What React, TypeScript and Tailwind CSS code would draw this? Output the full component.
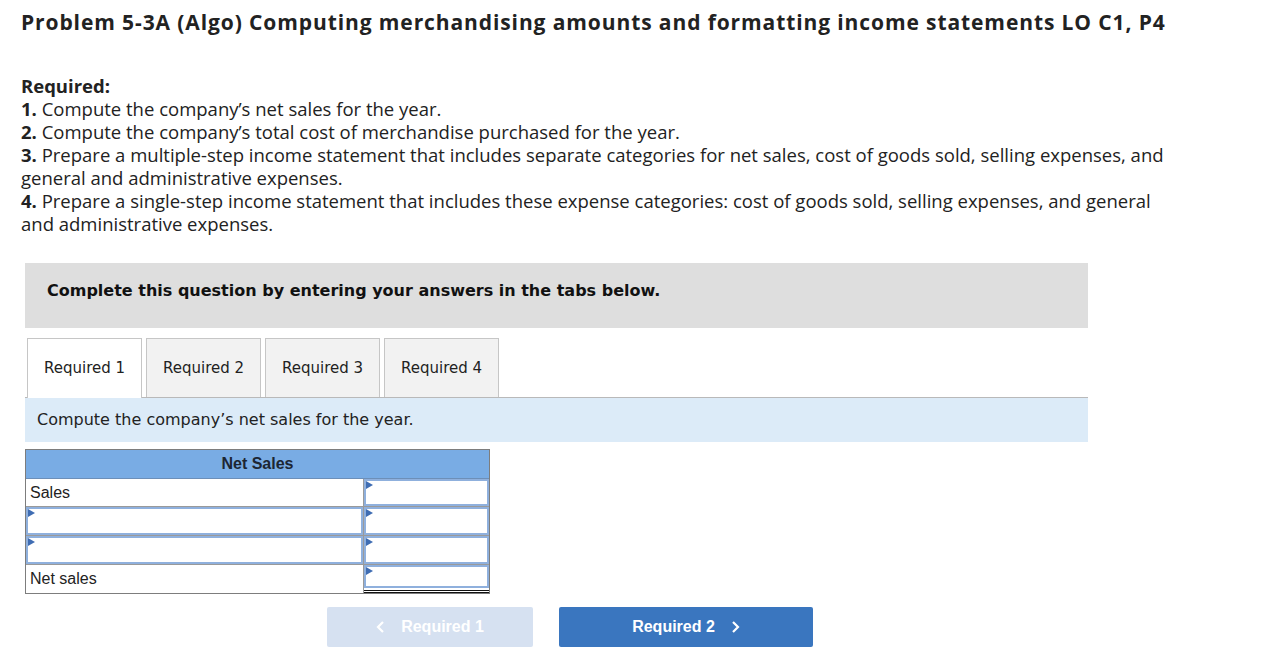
import React from 'react';

const tabs = ['Required 1', 'Required 2', 'Required 3', 'Required 4'];

const Marker = () => (
  <span className="absolute left-0 top-0 w-0 h-0 border-t-[4px] border-b-[4px] border-l-[7px] border-t-transparent border-b-transparent border-l-[#3f6db3]" />
);

const InputCell = ({ className = '' }: { className?: string }) => (
  <div className={`relative h-full border-2 border-[#8fb0dd] bg-white ${className}`}>
    <Marker />
  </div>
);

const Chevron = ({ dir }: { dir: 'left' | 'right' }) => (
  <svg width="9" height="14" viewBox="0 0 9 14">
    <path d={dir === 'right' ? 'M2 2l5 5-5 5' : 'M7 2L2 7l5 5'} stroke="white" strokeWidth="2.2" fill="none" />
  </svg>
);

export default function App() {
  return (
    <div className="w-[1282px] h-[665px] bg-white text-[#222] overflow-hidden">
      <div className="pl-[21px] pt-[8px]" style={{ fontFamily: '"Open Sans", Lato, sans-serif' }}>
        <h1 className="text-[21px] leading-[28px] font-bold tracking-[0.9px] text-[#222]">
          Problem 5-3A (Algo) Computing merchandising amounts and formatting income statements LO C1, P4
        </h1>

        <div className="mt-[38px] text-[18.5px] leading-[23px] w-[1155px] text-[#222]">
          <p className="font-bold">Required:</p>
          <p><b>1.</b> Compute the company’s net sales for the year.</p>
          <p><b>2.</b> Compute the company’s total cost of merchandise purchased for the year.</p>
          <p><b>3.</b> Prepare a multiple-step income statement that includes separate categories for net sales, cost of goods sold, selling expenses, and general and administrative expenses.</p>
          <p><b>4.</b> Prepare a single-step income statement that includes these expense categories: cost of goods sold, selling expenses, and general and administrative expenses.</p>
        </div>
      </div>

      <div className="ml-[25px] mt-[28px] w-[1063px]" style={{ fontFamily: '"DejaVu Sans", Verdana, sans-serif' }}>
        <div className="h-[65px] bg-[#dedede] flex items-center pl-[22px] pb-[10px]">
          <span className="text-[16px] font-bold text-[#111]">Complete this question by entering your answers in the tabs below.</span>
        </div>

        <div className="mt-[10px] flex items-end h-[60px] border-b border-[#b9b9b9]">
          {tabs.map((t, i) => (
            <div
              key={t}
              className={`w-[115px] h-[59px] mx-[2px] flex items-center justify-center text-[15px] border border-[#c6c6c6] border-b-0 ${
                i === 0 ? 'bg-white h-[60px] -mb-px' : 'bg-[#f2f2f2]'
              }`}
            >
              {t}
            </div>
          ))}
        </div>

        <div className="h-[44px] bg-[#dcebf8] flex items-center pl-[12px] text-[16px] text-[#222]">
          Compute the company’s net sales for the year.
        </div>

        <div className="mt-[7px] w-[465px] border border-[#7d7d7d]" style={{ fontFamily: '"Liberation Sans", Arial, sans-serif' }}>
          <div className="h-[29px] bg-[#79ace4] flex items-center justify-center text-[16px] font-bold text-[#1c2633] border-b border-[#6d8fb8]">
            Net Sales
          </div>
          <div className="grid grid-cols-[338px_1fr]">
            <div className="h-[28px] flex items-center pl-[4px] text-[16px] border-b border-r border-[#9a9a9a]">Sales</div>
            <div className="h-[28px] border-b border-[#9a9a9a]">
              <InputCell />
            </div>
            <div className="h-[29px] border-b border-r border-[#9a9a9a]">
              <InputCell />
            </div>
            <div className="h-[29px] border-b border-[#9a9a9a]">
              <InputCell />
            </div>
            <div className="h-[29px] border-b border-r border-[#9a9a9a]">
              <InputCell />
            </div>
            <div className="h-[29px] border-b border-[#9a9a9a]">
              <InputCell />
            </div>
            <div className="h-[28px] flex items-center pl-[4px] text-[16px] border-r border-[#9a9a9a]">Net sales</div>
            <div className="h-[28px] pb-[2px] border-b-[3px] border-double border-[#111]">
              <InputCell />
            </div>
          </div>
        </div>

        <div className="mt-[13px] flex gap-[26px] pl-[302px]" style={{ fontFamily: '"Liberation Sans", Arial, sans-serif' }}>
          <div className="w-[206px] h-[40px] rounded-[2px] bg-[#d6e1f1] flex items-center justify-center gap-[16px] text-white text-[16px] font-bold">
            <Chevron dir="left" />
            <span>Required 1</span>
          </div>
          <div className="w-[254px] h-[40px] rounded-[2px] bg-[#3a76bf] flex items-center justify-center gap-[16px] text-white text-[16px] font-bold">
            <span>Required 2</span>
            <Chevron dir="right" />
          </div>
        </div>
      </div>
    </div>
  );
}
